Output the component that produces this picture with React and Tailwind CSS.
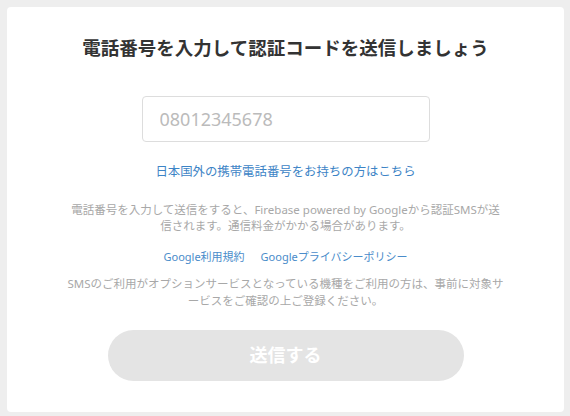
export default function App() {
  return (
    <div
      className="w-[570px] h-[416px] bg-[#eeeeee] pt-[7px] pl-[7px] pr-[6px] pb-[4px]"
      style={{ fontFamily: '"Noto Sans", "Noto Sans CJK JP", sans-serif' }}
    >
      <div className="h-full bg-white rounded-[4px] flex flex-col items-center pt-[28px]">
        <h1 className="text-[18.5px] leading-[26px] font-bold text-[#333333]">
          電話番号を入力して認証コードを送信しましょう
        </h1>

        <input
          type="tel"
          placeholder="08012345678"
          className="mt-[35px] w-[288px] h-[46px] border border-[#dddddd] rounded-[4px] px-[17px] text-[18px] text-[#333] placeholder:text-[#bbbbbb] outline-none"
        />

        <a href="#" className="mt-[21px] text-[12.4px] leading-[18px] text-[#3d84c6]">
          日本国外の携帯電話番号をお持ちの方はこちら
        </a>

        <p className="mt-[21px] text-[11.5px] leading-[16px] text-[#a8a8a8] text-center">
          電話番号を入力して送信をすると、Firebase powered by Googleから認証SMSが送
          <br />
          信されます。通信料金がかかる場合があります。
        </p>

        <div className="mt-[15px] flex gap-[16px] text-[11px] leading-[16px] text-[#4a8cca]">
          <a href="#">Google利用規約</a>
          <a href="#">Googleプライバシーポリシー</a>
        </div>

        <p className="mt-[10px] text-[11.5px] leading-[17px] text-[#a8a8a8] text-center">
          SMSのご利用がオプションサービスとなっている機種をご利用の方は、事前に対象サ
          <br />
          ービスをご確認の上ご登録ください。
        </p>

        <button
          disabled
          className="mt-[21px] w-[356px] h-[51px] rounded-full bg-[#e4e4e4] text-white text-[18px] font-bold"
        >
          送信する
        </button>
      </div>
    </div>
  );
}
